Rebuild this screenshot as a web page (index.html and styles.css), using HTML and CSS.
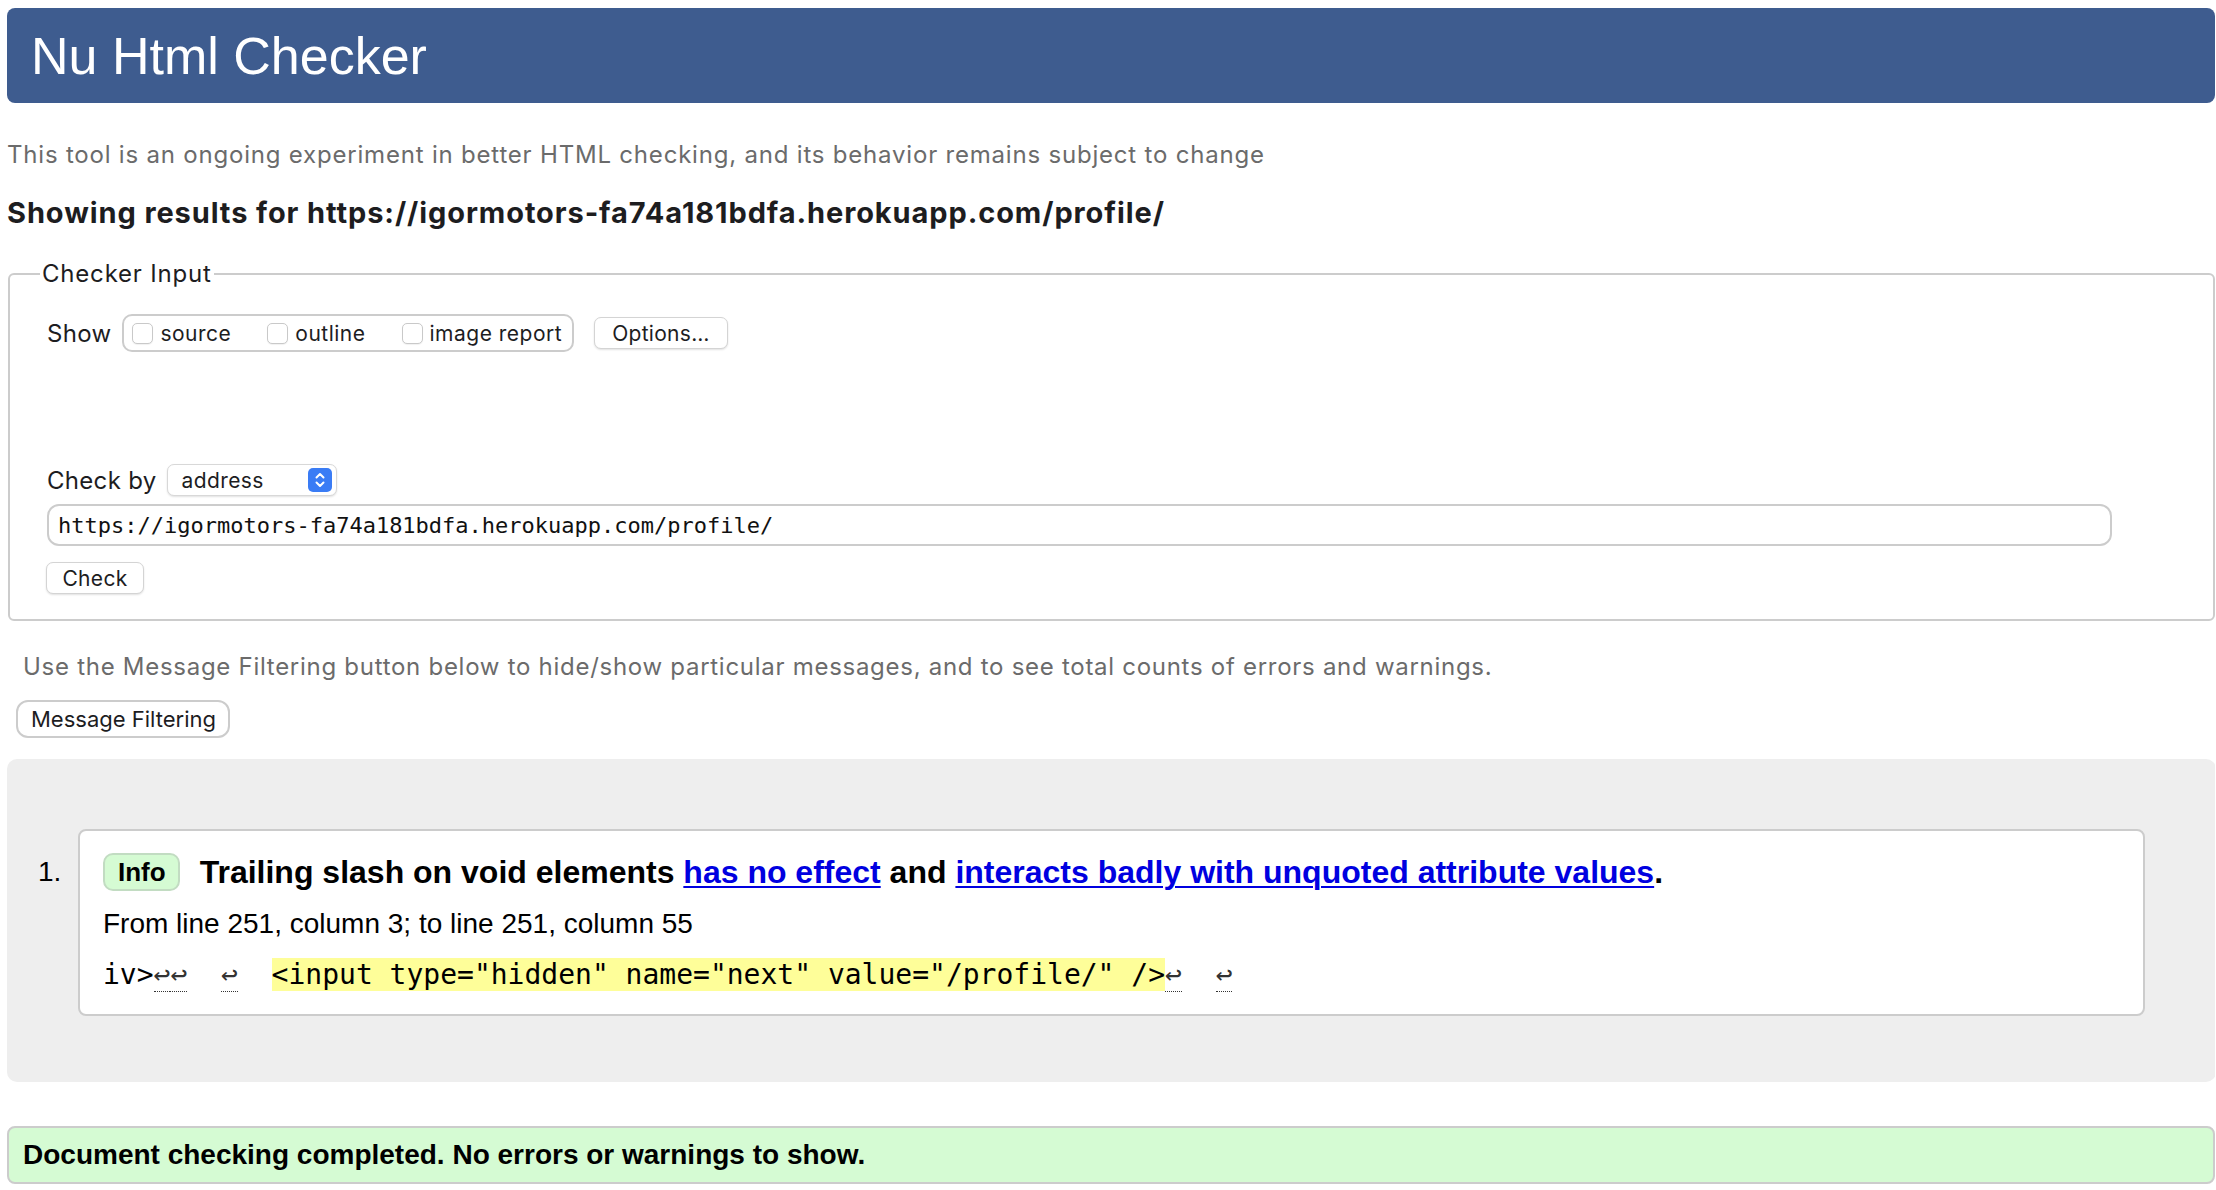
FILE: index.html
```html
<!DOCTYPE html>
<html lang="en">
<head>
<meta charset="utf-8">
<title>Nu Html Checker</title>
<link rel="stylesheet" href="styles.css">
</head>
<body>
<header class="masthead"><h1>Nu Html Checker</h1></header>
<p class="intro">This tool is an ongoing experiment in better HTML checking, and its behavior remains subject to change</p>
<p class="showing">Showing results for https://igormotors-fa74a181bdfa.herokuapp.com/profile/</p>
<fieldset class="checker">
  <legend>Checker Input</legend>
  <div class="inner">
    <div class="show-row">
      <span class="lbl">Show</span>
      <div class="group">
        <label class="cb"><span class="box"></span>source</label>
        <label class="cb"><span class="box"></span>outline</label>
        <label class="cb"><span class="box"></span>image report</label>
      </div>
      <span class="btn opt">Options…</span>
    </div>
    <div class="spacer"></div>
    <div class="by-row">
      <span class="lbl">Check by</span>
      <div class="select"><span>address</span><span class="stepper"><svg width="24" height="24" viewBox="0 0 24 24"><rect width="24" height="24" rx="5" fill="#3a7cf5"/><path d="M8.5 9.5 12 6l3.5 3.5M8.5 14.5 12 18l3.5-3.5" fill="none" stroke="#fff" stroke-width="2" stroke-linecap="round" stroke-linejoin="round"/></svg></span></div>
    </div>
    <div class="url">https://igormotors-fa74a181bdfa.herokuapp.com/profile/</div>
    <span class="btn check">Check</span>
  </div>
</fieldset>
<p class="hint">Use the Message Filtering button below to hide/show particular messages, and to see total counts of errors and warnings.</p>
<div class="filter-wrap"><span class="btn-filter">Message Filtering</span></div>
<div class="results">
  <div class="msg-row">
    <div class="num">1.</div>
    <div class="card">
      <div class="title"><span class="badge">Info</span><span class="msg">Trailing slash on void elements <a href="#">has no effect</a> and <a href="#">interacts badly with unquoted attribute values</a>.</span></div>
      <p class="loc">From line 251, column 3; to line 251, column 55</p>
      <p class="extract"><code>iv&gt;<b class="lf">↩</b><b class="lf">↩</b>  <b class="lf">↩</b>  <mark>&lt;input type="hidden" name="next" value="/profile/" /&gt;</mark><b class="lf">↩</b>  <b class="lf">↩</b></code></p>
    </div>
  </div>
</div>
<div class="done">Document checking completed. No errors or warnings to show.</div>
</body>
</html>
```
FILE: styles.css
```css
* { box-sizing: border-box; }
html, body { background: #fff; }
body {
  margin: 8px 1px 0 7px;
  font-family: Inter, "Noto Sans", sans-serif;
  color: #1d1d1f;
}
.masthead {
  height: 95px;
  background: #3e5c8f;
  border-radius: 8px;
  display: flex;
  align-items: center;
  padding-left: 24px;
}
.masthead h1 {
  margin: 0;
  font: 400 52px/1 "Liberation Sans", Arial, sans-serif;
  color: #fff;
}
.intro {
  margin: 37px 0 0;
  font-size: 24px;
  letter-spacing: 0.8px;
  line-height: 30px;
  color: #6b6b6b;
}
.showing {
  margin: 25px 0 0;
  font-size: 29px;
  letter-spacing: 0.9px;
  font-weight: 700;
  line-height: 36px;
  color: #1d1d1f;
}
.checker {
  margin: 28px 0 0 1px;
  padding: 0;
  border: 2px solid #cccccc;
  border-radius: 6px;
  min-width: 0;
}
.checker legend {
  margin-left: 30px;
  padding: 0 2px;
  font-size: 24px;
  letter-spacing: 0.8px;
  line-height: 30px;
  color: #1d1d1f;
}
.inner { padding: 25px 37px 25px; }
.show-row { display: flex; align-items: center; height: 38px; }
.lbl { font-size: 24px; letter-spacing: 0.3px; margin-right: 11px; color: #1d1d1f; }
.group {
  display: flex;
  align-items: center;
  height: 38px;
  border: 2px solid #cccccc;
  border-radius: 10px;
  padding: 0 10px 0 8px;
}
.cb { display: flex; align-items: center; font-size: 21px; letter-spacing: 0.5px; margin-right: 36px; color: #1d1d1f; }
.cb:last-child { margin-right: 0; }
.box {
  width: 21px; height: 21px;
  border: 1px solid #c9c9c9;
  border-radius: 5px;
  margin-right: 7px;
  background: #fff;
  box-shadow: 0 1px 1px rgba(0,0,0,0.06);
}
.btn {
  display: inline-flex;
  align-items: center;
  height: 32px;
  padding: 0 17px;
  font-size: 21px;
  letter-spacing: 0.3px;
  background: #fff;
  border: 1px solid #d4d4d4;
  border-radius: 7px;
  box-shadow: 0 1px 2px rgba(0,0,0,0.12);
  color: #1d1d1f;
}
.opt { margin-left: 20px; }
.spacer { height: 112px; }
.by-row { display: flex; align-items: center; height: 32px; }
.select {
  display: flex;
  align-items: center;
  width: 170px;
  height: 32px;
  padding: 0 4px 0 13px;
  background: #fff;
  border: 1px solid #d8d8d8;
  border-radius: 7px;
  box-shadow: 0 1px 2px rgba(0,0,0,0.12);
  font-size: 21px;
  letter-spacing: 0.4px;
}
.stepper { margin-left: auto; display: flex; }
.url {
  margin-top: 8px;
  width: 97%;
  height: 42px;
  display: flex;
  align-items: center;
  padding-left: 9px;
  border: 2px solid #cccccc;
  border-radius: 12px;
  font: 22px "DejaVu Sans Mono", monospace;
  color: #111;
}
.check { margin-top: 16px; margin-left: -1px; width: 98px; justify-content: center; padding: 0; }
.hint {
  margin: 31px 0 0 16px;
  font-size: 24px;
  letter-spacing: 0.72px;
  line-height: 30px;
  color: #6b6b6b;
}
.filter-wrap { margin-top: 18px; padding-left: 9px; }
.btn-filter {
  display: inline-flex;
  align-items: center;
  height: 38px;
  padding: 0 12px 0 13px;
  border: 2px solid #cccccc;
  border-radius: 12px;
  font-size: 22px;
  color: #1d1d1f;
}
.results {
  margin-top: 21px;
  background: #eeeeee;
  border-radius: 10px;
  padding: 70px 71px 66px 0;
  margin-right: -1px;
}
.msg-row { display: flex; align-items: flex-start; }
.num {
  width: 71px;
  padding: 24px 0 0 31px;
  font: 28px/38px "Liberation Sans", Arial, sans-serif;
  color: #000;
}
.card {
  flex: 1;
  background: #fff;
  border: 2px solid #cccccc;
  border-radius: 8px;
  padding: 22px 23px 23px;
  font-family: "Liberation Sans", Arial, sans-serif;
  color: #000;
}
.title { display: flex; align-items: center; height: 38px; white-space: nowrap; }
.badge {
  height: 38px;
  padding: 0 12px 0 13px;
  background: #d5fbd3;
  border: 2px solid #c2dcc2;
  border-radius: 10px;
  font-weight: 700;
  font-size: 26px;
  line-height: 34px;
  margin-right: 20px;
}
.msg { font-weight: 700; font-size: 32px; line-height: 38px; }
.msg a { color: #0000e0; text-decoration: underline; text-decoration-thickness: 2px; text-underline-offset: 3px; }
.loc { margin: 17px 0 0; font-size: 28px; line-height: 32px; }
.extract { margin: 18px 0 0; font: 28px/33px "DejaVu Sans Mono", monospace; white-space: pre; }
.extract code { font: inherit; }
.extract mark { background: #fefe99; color: #000; }
.lf { font-weight: 400; color: #333; border-bottom: 1px dotted #333; }
.done {
  margin-top: 44px;
  height: 58px;
  display: flex;
  align-items: center;
  padding-left: 14px;
  background: #d5fbd3;
  border: 2px solid #cccccc;
  border-radius: 8px;
  font: 700 28px "Liberation Sans", Arial, sans-serif;
  color: #000;
}
```
